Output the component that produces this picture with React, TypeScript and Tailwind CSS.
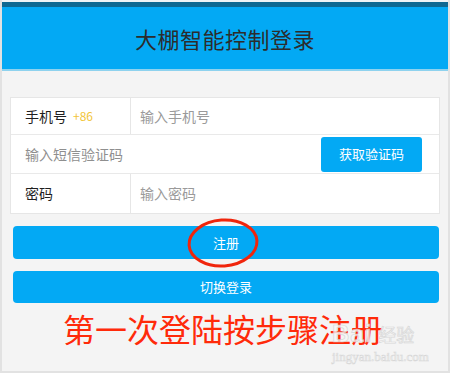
const cjk = { fontFamily: '"Noto Sans CJK SC", "Noto Sans", sans-serif' }

function Row({ children, last }: { children: React.ReactNode; last?: boolean }) {
  return (
    <div className={`flex items-center bg-white ${last ? '' : 'border-b border-[#e9e9e9]'}`}>{children}</div>
  )
}

export default function App() {
  return (
    <div
      style={cjk}
      className="relative flex h-[373px] w-[450px] flex-col overflow-hidden border-x-2 border-b-2 border-[#e2e2e2] bg-[#f4f4f4]"
    >
      <div className="h-[2px] bg-[#eef3f6]" />
      <div className="h-[5px] bg-[#0d6892]" />
      <header className="flex h-[62px] items-center justify-center bg-[#03a9f4]">
        <h1 className="text-[22px] leading-none tracking-[0.5px] text-[#2c2c2c]">大棚智能控制登录</h1>
      </header>
      <div className="h-[2px] bg-[#8ed2ee]" />

      <div className="flex flex-col px-[8px] pt-[26px]">
        <div className="flex flex-col border border-[#e6e6e6] bg-white">
          <Row>
            <div className="flex h-[36px] w-[120px] items-center gap-[6px] border-r border-[#e6e6e6] pl-[14px]">
              <span className="text-[14px] text-[#1f1f1f]">手机号</span>
              <span className="text-[12px] text-[#f2c53a]">+86</span>
            </div>
            <span className="pl-[9px] text-[14px] text-[#9a9a9a]">输入手机号</span>
          </Row>
          <Row>
            <div className="flex h-[38px] flex-1 items-center pl-[14px] text-[14px] text-[#8f8f8f]">输入短信验证码</div>
            <button className="mr-[17px] flex h-[35px] w-[101px] items-center justify-center rounded-[3px] bg-[#03a9f4] text-[13px] text-white">
              获取验证码
            </button>
          </Row>
          <Row last>
            <div className="flex h-[39px] w-[120px] items-center border-r border-[#e6e6e6] pl-[14px] text-[14px] text-[#1f1f1f]">
              密码
            </div>
            <span className="pl-[9px] text-[14px] text-[#9a9a9a]">输入密码</span>
          </Row>
        </div>

        <div className="relative mt-[12px] pl-[3px] pr-[1px]">
          <button className="flex h-[33px] w-full items-center justify-center rounded-[4px] bg-[#03a9f4] text-[13px] text-white">
            注册
          </button>
          <svg className="absolute left-[176px] top-[-9px]" width="74" height="52" viewBox="0 0 74 52">
            <ellipse cx="37" cy="26" rx="34" ry="23" fill="none" stroke="#f0250c" strokeWidth="3" transform="rotate(-4 37 26)" />
          </svg>
        </div>
        <div className="mt-[12px] pl-[3px] pr-[1px]">
          <button className="flex h-[32px] w-full items-center justify-center rounded-[4px] bg-[#03a9f4] text-[13px] text-white">
            切换登录
          </button>
        </div>

        <div className="relative mt-[5px] flex justify-center">
          <p className="pr-[4px] text-[32px] leading-[40px] text-[#ff2a0a]">第一次登陆按步骤注册</p>
          {/* baidu jingyan watermark */}
          <div className="absolute left-[322px] top-[14px] flex flex-col items-start opacity-80">
            <div className="flex items-center gap-[6px]">
              <span
                className="text-[24px] font-bold leading-none tracking-[1px] text-[#f7f7f7]"
                style={{ fontFamily: '"Liberation Sans", sans-serif', WebkitTextStroke: '0.7px #d2d2d2' }}
              >
                Bai
              </span>
              <span className="text-[18px] leading-none text-[#f7f7f7]" style={{ WebkitTextStroke: '0.7px #d2d2d2' }}>
                经验
              </span>
            </div>
            <span
              className="mt-[4px] text-[13px] leading-none text-[#f7f7f7]"
              style={{ fontFamily: '"Liberation Serif", serif', WebkitTextStroke: '0.5px #cfcfcf' }}
            >
              jingyan.baidu.com
            </span>
          </div>
        </div>
      </div>
    </div>
  )
}
